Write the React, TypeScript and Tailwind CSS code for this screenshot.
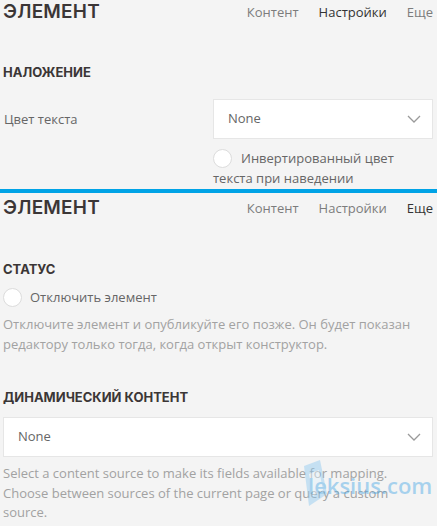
import React from "react";

const body = { fontFamily: '"Open Sans", "Noto Sans", sans-serif' };
const head = { fontFamily: 'Inter, "Noto Sans", sans-serif' };

function Chevron() {
  return (
    <svg width="14" height="8" viewBox="0 0 14 8" fill="none" className="shrink-0">
      <path d="M1 1l6 6 6-6" stroke="#9a9a9a" strokeWidth="1.3" />
    </svg>
  );
}

function Radio() {
  return <span className="block w-[19px] h-[19px] rounded-full bg-white border border-[#dcdcdc] shrink-0" />;
}

function Header({ active }: { active: number }) {
  const tabs = ["Контент", "Настройки", "Еще"];
  return (
    <div className="flex items-start justify-between h-[24px] pl-[3px] pr-[4px]">
      <h1 className="mt-[2px] text-[19px] font-semibold leading-[20px] text-[#3b3636] tracking-[0.2px]" style={head}>
        ЭЛЕМЕНТ
      </h1>
      <nav className="flex gap-[20px] text-[13px] leading-[20px] mt-[2px]">
        {tabs.map((t, i) => (
          <span key={t} className={i === active ? "text-[#333]" : "text-[#7c7c7c]"}>
            {t}
          </span>
        ))}
      </nav>
    </div>
  );
}

function SectionTitle({ children, className }: { children: React.ReactNode; className: string }) {
  return (
    <div className={"pl-[3px] text-[13px] font-bold leading-[16px] text-[#3b3636] " + className} style={head}>
      {children}
    </div>
  );
}

function Select({ className }: { className: string }) {
  return (
    <div
      className={
        "h-[40px] bg-white border border-[#e6e6e6] flex items-center justify-between pl-[14px] pr-[11px] text-[13px] text-[#666] " +
        className
      }
    >
      <span>None</span>
      <Chevron />
    </div>
  );
}

export default function App() {
  return (
    <div className="relative w-[437px] h-[526px] bg-[#f4f4f4] overflow-hidden" style={body}>
      {/* upper panel */}
      <section className="h-[189px]">
        <Header active={1} />
        <SectionTitle className="mt-[40px]">НАЛОЖЕНИЕ</SectionTitle>
        <div className="flex mt-[19px]">
          <div className="w-[213px] pl-[4px] pt-[10px] text-[13px] leading-[20px] text-[#666]">Цвет текста</div>
          <div className="flex-1 mr-[4px]">
            <Select className="" />
            <div className="mt-[9px] text-[13px] leading-[20px] text-[#666]">
              <div className="flex items-center h-[20px] gap-[9px]">
                <Radio />
                <span>Инвертированный цвет</span>
              </div>
              <div>текста при наведении</div>
            </div>
          </div>
        </div>
      </section>

      <div className="h-[4px] bg-[#00a3e6]" />

      {/* lower panel */}
      <section className="pt-[3px]">
        <Header active={2} />
        <SectionTitle className="mt-[41px]">СТАТУС</SectionTitle>
        <div className="flex items-center h-[20px] gap-[8px] pl-[3px] mt-[10px] text-[13px] leading-[20px] text-[#666]">
          <Radio />
          <span>Отключить элемент</span>
        </div>
        <p className="pl-[3px] pr-[4px] mt-[8px] text-[13px] leading-[19.5px] text-[#a2a2a2]">
          Отключите элемент и опубликуйте его позже. Он будет показан редактору только тогда, когда открыт конструктор.
        </p>
        <SectionTitle className="mt-[35px]">ДИНАМИЧЕСКИЙ КОНТЕНТ</SectionTitle>
        <Select className="ml-[3px] mr-[4px] mt-[12px]" />
        <p className="pl-[3px] pr-[4px] mt-[7px] text-[13px] leading-[19.5px] text-[#a2a2a2]">
          Select a content source to make its fields available for mapping. Choose between sources of the current page or query a custom source.
        </p>
      </section>

      {/* watermark */}
      <div className="absolute left-[300px] top-[458px] w-[130px] h-[50px] opacity-45 pointer-events-none">
        <svg width="30" height="50" viewBox="0 0 30 50" fill="none" className="absolute left-0 top-0">
          <path d="M4 8l16-6 7 34-18 12z" fill="#8ec9f0" />
          <path d="M9 16l10-4 4 20-10 6z" fill="#e4f3fc" />
        </svg>
        <span className="absolute left-[8px] top-[15px] text-[22px] leading-[24px] text-[#4aa8e6] font-semibold" style={body}>
          leksius.com
        </span>
      </div>
    </div>
  );
}
